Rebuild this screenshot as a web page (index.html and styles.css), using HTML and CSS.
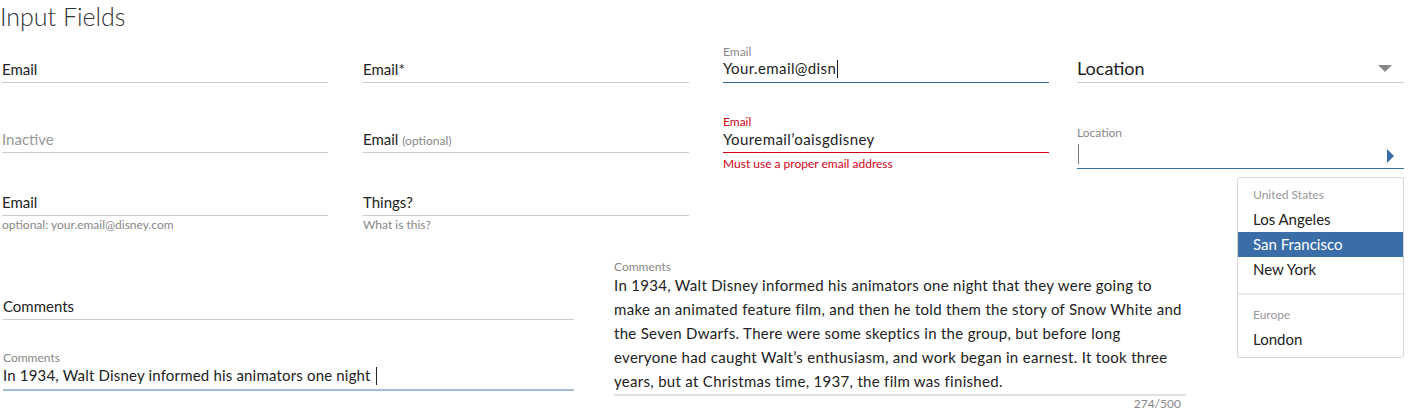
FILE: index.html
```html
<!DOCTYPE html>
<html lang="en">
<head>
<meta charset="utf-8">
<title>Input Fields</title>
<link rel="stylesheet" href="styles.css">
</head>
<body>
<div class="page">
  <h1 class="title">Input Fields</h1>

  <div class="row row1">
    <div class="field">
      <div class="flabel"></div>
      <div class="control"><span class="ph">Email</span></div>
    </div>
    <div class="field">
      <div class="flabel"></div>
      <div class="control"><span class="ph">Email*</span></div>
    </div>
    <div class="field focused">
      <div class="flabel">Email</div>
      <div class="control"><span class="val">Your.email@disn</span><span class="cursor"></span></div>
    </div>
    <div class="field wide">
      <div class="flabel"></div>
      <div class="control select"><span class="big">Location</span><span class="tri-down"></span></div>
    </div>
  </div>

  <div class="row row2">
    <div class="field">
      <div class="flabel"></div>
      <div class="control"><span class="ph inactive">Inactive</span></div>
    </div>
    <div class="field">
      <div class="flabel"></div>
      <div class="control"><span class="ph">Email</span> <span class="opt">(optional)</span></div>
    </div>
    <div class="field error">
      <div class="flabel">Email</div>
      <div class="control"><span class="val">Youremail’oaisgdisney</span></div>
      <div class="helper">Must use a proper email address</div>
    </div>
    <div class="field wide open">
      <div class="flabel">Location</div>
      <div class="control select"><span class="cursor grey"></span><span class="tri-right"></span></div>
      <div class="menu">
        <div class="group">
          <div class="glabel">United States</div>
          <div class="item">Los Angeles</div>
          <div class="item active">San Francisco</div>
          <div class="item">New York</div>
        </div>
        <div class="group">
          <div class="glabel">Europe</div>
          <div class="item">London</div>
        </div>
      </div>
    </div>
  </div>

  <div class="row row3">
    <div class="field">
      <div class="flabel"></div>
      <div class="control"><span class="ph">Email</span></div>
      <div class="helper">optional: your.email@disney.com</div>
    </div>
    <div class="field">
      <div class="flabel"></div>
      <div class="control"><span class="ph">Things?</span></div>
      <div class="helper">What is this?</div>
    </div>
  </div>

  <div class="comments">
    <div class="ccol left">
      <div class="field long">
        <div class="flabel"></div>
        <div class="control"><span class="ph">Comments</span></div>
      </div>
      <div class="field long typing">
        <div class="flabel">Comments</div>
        <div class="control"><span class="val2">In 1934, Walt Disney informed his animators one night </span><span class="cursor"></span></div>
      </div>
    </div>
    <div class="ccol right">
      <div class="tlabel">Comments</div>
      <div class="textarea">In 1934, Walt Disney informed his animators one night that they were going to make an animated feature film, and then he told them the story of Snow White and the Seven Dwarfs. There were some skeptics in the group, but before long everyone had caught Walt’s enthusiasm, and work began in earnest. It took three years, but at Christmas time, 1937, the film was finished.</div>
      <div class="counter">274/500</div>
    </div>
  </div>
</div>
</body>
</html>
```

FILE: styles.css
```css
* { box-sizing: border-box; }
html, body { margin: 0; padding: 0; background: #fff; }
body {
  font-family: Lato, "Noto Sans", "Liberation Sans", sans-serif;
  color: #222;
  font-size: 15px;
}
.page { padding-left: 2px; }

.title {
  margin: 0 0 12px -2px;
  font-size: 25px;
  font-weight: 300;
  line-height: 32px;
  color: #333;
}

.row {
  display: grid;
  grid-template-columns: 361px 360px 354px 327px;
  align-items: start;
}
.row1 { height: 70px; }
.row2 { height: 63px; }
.row3 { height: 83px; }

.field { width: 326px; position: relative; }
.field.wide { width: 327px; }

.flabel {
  height: 16px;
  font-size: 12px;
  line-height: 16px;
  color: #888;
}
.control {
  position: relative;
  height: 23px;
  line-height: 18px;
  font-size: 15px;
  color: #222;
  border-bottom: 1px solid #ccc;
  white-space: nowrap;
}
.ph { color: #222; }
.ph.inactive { color: #999; }
.opt { font-size: 12px; color: #888; }
.val { letter-spacing: 0.4px; }
.val2 { letter-spacing: 0.18px; }

.focused .control { border-bottom-color: #3b6ea8; line-height: 15px; }
.error .flabel { color: #d0021b; }
.error .control { border-bottom-color: #d0021b; }
.error .helper { color: #d0021b; }

.helper {
  padding-top: 3px;
  font-size: 12px;
  line-height: 16px;
  color: #888;
}
.row3 .helper { padding-top: 1px; }

.cursor {
  display: inline-block;
  width: 1px;
  height: 18px;
  background: #222;
  vertical-align: -4px;
  margin-left: 1px;
}
.cursor.grey { background: #777; height: 20px; vertical-align: -6px; }

.select { line-height: 16px; }
.select .big { font-size: 18px; }
.tri-down {
  position: absolute;
  right: 12px;
  top: 5px;
  width: 0; height: 0;
  border-left: 7px solid transparent;
  border-right: 7px solid transparent;
  border-top: 7px solid #888;
}

.open { margin-top: 11px; }
.open .control {
  height: 28px;
  line-height: 22px;
  padding-bottom: 5px;
  border-bottom-color: #3b6ea8;
}
.tri-right {
  position: absolute;
  right: 10px;
  top: 8px;
  width: 0; height: 0;
  border-top: 7px solid transparent;
  border-bottom: 7px solid transparent;
  border-left: 7px solid #3b6ea8;
}

.menu {
  position: absolute;
  right: 0;
  top: calc(100% + 8px);
  width: 167px;
  background: #fff;
  border: 1px solid #d6d6d6;
  border-radius: 3px;
  padding-bottom: 5px;
  z-index: 2;
}
.group { padding-bottom: 11px; }
.group + .group { border-top: 2px solid #eee; padding-top: 11px; padding-bottom: 0; }
.group:first-child .glabel { padding-top: 8px; }
.glabel {
  font-size: 12px;
  line-height: 18px;
  color: #999;
  padding: 0 15px 3px;
}
.item {
  font-size: 15px;
  line-height: 25px;
  padding: 0 15px;
  color: #222;
}
.item.active { background: #3b6ea8; color: #fff; }

.comments {
  display: flex;
  align-items: flex-start;
  gap: 40px;
}
.ccol.left {
  width: 571px;
  margin-left: 1px;
  margin-top: 21px;
  display: flex;
  flex-direction: column;
  gap: 30px;
}
.field.long { width: 571px; }
.typing .control { height: 25px; border-bottom: 2px solid #a3bbd6; }
.ccol.right { width: 568px; }
.tlabel {
  font-size: 12px;
  line-height: 14px;
  color: #888;
}
.textarea {
  font-size: 15px;
  line-height: 24px;
  letter-spacing: 0.3px;
  margin-right: -4px;
  color: #222;
  padding-bottom: 1px;
  margin-top: -1px;
  border-bottom: 2px solid #e2e2e2;
}
.counter {
  text-align: right;
  font-size: 12px;
  line-height: 16px;
  color: #888;
  padding-right: 1px;
}
```
